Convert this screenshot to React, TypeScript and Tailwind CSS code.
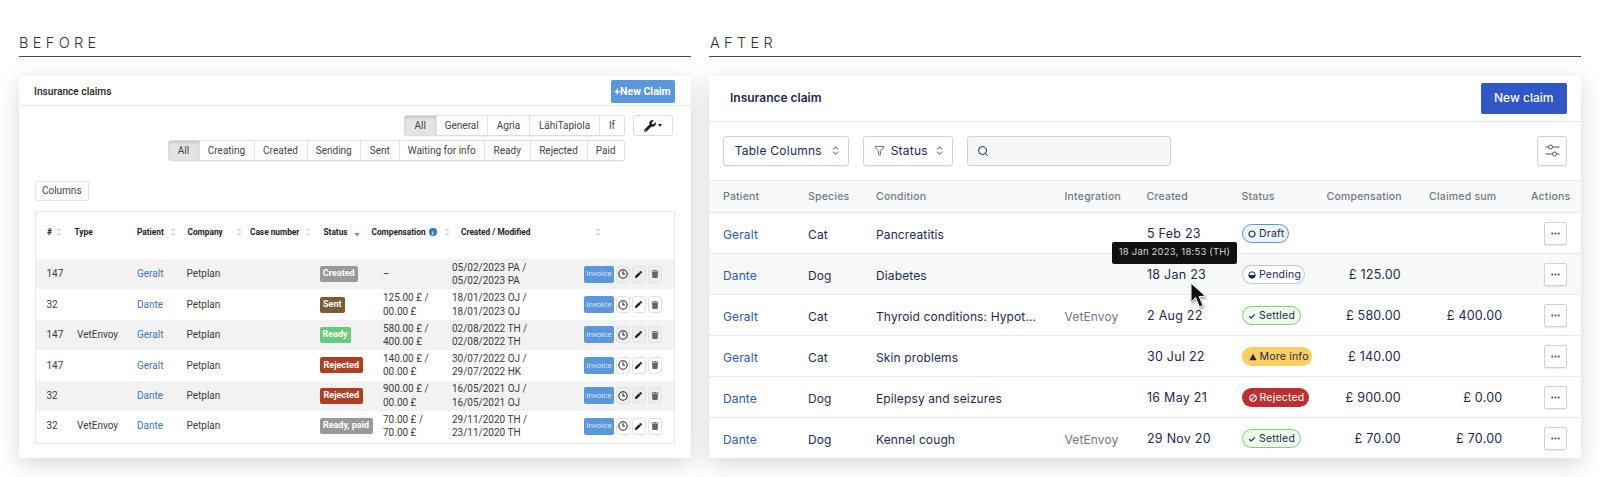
import { ChevronsUpDown, Clock3, Ellipsis, Funnel, Search } from "lucide-react";
import { FaPen, FaTrash, FaWrench } from "react-icons/fa";
import { ReactNode } from "react";

const oldRows = [
  { id: "147", type: "", patient: "Geralt", status: "Created", statusClass: "bg-[#999999] w-[38.5px]", comp: ["–", ""], dates: ["05/02/2023 PA /", "05/02/2023 PA"] },
  { id: "32", type: "", patient: "Dante", status: "Sent", statusClass: "bg-[#7f5a33] w-[25.5px]", comp: ["125.00 £ /", "00.00 £"], dates: ["18/01/2023 OJ /", "18/01/2023 OJ"] },
  { id: "147", type: "VetEnvoy", patient: "Geralt", status: "Ready", statusClass: "bg-[#66cc77] w-[31px]", comp: ["580.00 £ /", "400.00 £"], dates: ["02/08/2022 TH /", "02/08/2022 TH"] },
  { id: "147", type: "", patient: "Geralt", status: "Rejected", statusClass: "bg-[#b03e22] w-[43.5px]", comp: ["140.00 £ /", "00.00 £"], dates: ["30/07/2022 OJ /", "29/07/2022 HK"] },
  { id: "32", type: "", patient: "Dante", status: "Rejected", statusClass: "bg-[#b03e22] w-[43.5px]", comp: ["900.00 £ /", "00.00 £"], dates: ["16/05/2021 OJ /", "16/05/2021 OJ"] },
  { id: "32", type: "VetEnvoy", patient: "Dante", status: "Ready, paid", statusClass: "bg-[#999999] w-[53px]", comp: ["70.00 £ /", "70.00 £"], dates: ["29/11/2020 TH /", "23/11/2020 TH"] },
];

const newRows = [
  { patient: "Geralt", species: "Cat", condition: "Pancreatitis", integration: "", created: "5 Feb 23", status: "draft", comp: "", claimed: "" },
  { patient: "Dante", species: "Dog", condition: "Diabetes", integration: "", created: "18 Jan 23", status: "pending", comp: "£ 125.00", claimed: "" },
  { patient: "Geralt", species: "Cat", condition: "Thyroid conditions: Hypot...", integration: "VetEnvoy", created: "2 Aug 22", status: "settled", comp: "£ 580.00", claimed: "£ 400.00" },
  { patient: "Geralt", species: "Cat", condition: "Skin problems", integration: "", created: "30 Jul 22", status: "info", comp: "£ 140.00", claimed: "" },
  { patient: "Dante", species: "Dog", condition: "Epilepsy and seizures", integration: "", created: "16 May 21", status: "rejected", comp: "£ 900.00", claimed: "£ 0.00" },
  { patient: "Dante", species: "Dog", condition: "Kennel cough", integration: "VetEnvoy", created: "29 Nov 20", status: "settled", comp: "£ 70.00", claimed: "£ 70.00" },
];

const SortArrows = ({ active }: { active?: boolean }) => (
  <svg width="6" height="10" viewBox="0 0 6 10" className="shrink-0">
    {!active && <path d="M3 0.5 L5.5 4 H0.5 Z" fill="#dddddd" />}
    <path d="M3 9.5 L5.5 6 H0.5 Z" fill={active ? "#7a7fd8" : "#dddddd"} />
  </svg>
);

const Segments = ({ items }: { items: [string, string][] }) => (
  <div className="flex h-[21px] rounded-[3px] border border-[#dddddd] shadow-[0_1px_1px_rgba(0,0,0,0.05)]">
    {items.map(([label, width], i) => (
      <div
        key={label}
        style={{ width }}
        className={`flex items-center justify-center border-r border-[#e2e2e2] last:border-r-0 text-[10px] text-[#444444] ${i === 0 ? "bg-[#e4e4e4] shadow-[inset_0_2px_3px_rgba(0,0,0,0.12)]" : "bg-white"}`}
      >
        {label}
      </div>
    ))}
  </div>
);

const OldIconButton = ({ children, shaded }: { children: ReactNode; shaded: boolean }) => (
  <div className={`flex h-[17px] w-[14.5px] items-center justify-center rounded-[3px] border border-[#e2e2e2] ${shaded ? "bg-[#eeeeee]" : "bg-white"}`}>
    {children}
  </div>
);

const Before = () => (
  <section className="w-[671.5px] shrink-0 font-['Roboto',sans-serif]">
    <h2 className="flex h-[56.5px] items-end border-b border-[#3f4a52] pb-[3px] font-['Inter',sans-serif] text-[14.5px] leading-[20px] font-light tracking-[0.3em] text-[#27323a]">
      BEFORE
    </h2>
    <div className="mt-[19.5px] h-[382px] rounded-[2px] bg-white shadow-[0_6px_22px_rgba(0,0,0,0.16)]">
      <div className="flex h-[30px] items-center justify-between border-b border-[#e9e9e9] pt-[2px] pr-[16px] pl-[15px]">
        <span className="text-[10.2px] font-medium text-[#222222]">Insurance claims</span>
        <div className="flex h-[22.5px] w-[64px] items-center justify-center rounded-[2px] bg-[#5b97dc] text-[10.5px] font-bold text-white">
          +New Claim
        </div>
      </div>
      <div className="mt-[9px] flex justify-end gap-[8px] pr-[18px]">
        <Segments items={[["All", "31.5px"], ["General", "51.5px"], ["Agria", "42px"], ["LähiTapiola", "70px"], ["If", "24px"]]} />
        <div className="flex h-[21px] w-[39.5px] items-center justify-center gap-[2px] rounded-[3px] border border-[#dddddd] bg-white">
          <FaWrench className="size-[12px] text-[#222222]" />
          <span className="h-0 w-0 border-x-[2.5px] border-t-[3px] border-x-transparent border-t-[#222222]" />
        </div>
      </div>
      <div className="mt-[4px] flex justify-end pr-[65.5px]">
        <Segments items={[["All", "31px"], ["Creating", "55px"], ["Created", "53px"], ["Sending", "53.5px"], ["Sent", "38.5px"], ["Waiting for info", "85.5px"], ["Ready", "45.5px"], ["Rejected", "57px"], ["Paid", "36.5px"]]} />
      </div>
      <div className="mt-[19.5px] ml-[16px] flex h-[20px] w-[53.5px] items-center justify-center rounded-[2px] border border-[#e5e5e5] text-[10px] text-[#444444]">
        Columns
      </div>
      <div className="mx-[15.5px] mt-[10.5px] h-[232.5px] border border-[#e8e8e8]">
        <div className="flex h-[47px] items-start pt-[14px] pl-[11.5px] text-[8.3px] font-bold text-[#222222]">
          <div className="flex w-[27.5px] items-center gap-[4px]"># <SortArrows /></div>
          <div className="w-[62.5px]">Type</div>
          <div className="flex w-[50.5px] items-center gap-[6px]">Patient <SortArrows /></div>
          <div className="flex w-[62.5px] items-center gap-[13px]">Company <SortArrows /></div>
          <div className="flex w-[73.5px] items-center gap-[6px]">Case number <SortArrows /></div>
          <div className="flex w-[48px] items-center gap-[6px]">Status <SortArrows active /></div>
          <div className="flex w-[89.5px] items-center gap-[3px]">
            Compensation
            <span className="flex size-[8px] items-center justify-center rounded-full bg-[#2f7cc4] text-[6px] text-white">i</span>
            <span className="ml-[4px]"><SortArrows /></span>
          </div>
          <div className="flex w-[140px] items-center justify-between">Created / Modified <SortArrows /></div>
        </div>
        {oldRows.map((row, i) => (
          <div key={i} className={`flex h-[30.4px] items-center pl-[11px] text-[10px] leading-[13.4px] text-[#3a3a3a] ${i % 2 === 0 ? "bg-[#f2f2f2]" : "bg-white"}`}>
            <div className="w-[30.5px]">{row.id}</div>
            <div className="w-[60px]">{row.type}</div>
            <div className="w-[49.5px] text-[#3d76b5]">{row.patient}</div>
            <div className="w-[133px]">Petplan</div>
            <div className="w-[63.5px]">
              <div className={`flex h-[16px] items-center justify-center rounded-[2px] text-[9px] font-bold text-white ${row.statusClass}`}>
                {row.status}
              </div>
            </div>
            <div className="w-[69px]">{row.comp[0]}<br />{row.comp[1]}</div>
            <div className="w-[132px]">{row.dates[0]}<br />{row.dates[1]}</div>
            <div className="flex items-center gap-[1.5px]">
              <div className="flex h-[17px] w-[30px] items-center justify-center rounded-[2px] bg-[#5b97dc] text-[8px] text-[#dbe8f7]">Invoice</div>
              <OldIconButton shaded={i % 2 === 0}><Clock3 className="size-[10px] text-[#222222]" strokeWidth={2.5} /></OldIconButton>
              <OldIconButton shaded={i % 2 === 0}><FaPen className="size-[7px] text-[#222222]" /></OldIconButton>
              <OldIconButton shaded={i % 2 === 0}><FaTrash className="size-[8px] text-[#666666]" /></OldIconButton>
            </div>
          </div>
        ))}
      </div>
    </div>
  </section>
);

const StatusBadge = ({ status }: { status: string }) => {
  const shared = "flex h-[18.5px] items-center gap-[3px] rounded-full pl-[5px] text-[10.5px] tracking-[0.02em]";
  if (status === "draft")
    return (
      <div className={`${shared} w-[47px] border-[1.5px] border-[#5f93e8] bg-[#eef4fd] text-[#1d2a4d]`}>
        <svg width="8" height="8" viewBox="0 0 8 8"><circle cx="4" cy="4" r="3" fill="none" stroke="#1d2a4d" strokeWidth="1.2" /></svg>
        Draft
      </div>
    );
  if (status === "pending")
    return (
      <div className={`${shared} w-[63px] border-[1.5px] border-[#c4c6ca] bg-white text-[#1d2a4d]`}>
        <svg width="8" height="8" viewBox="0 0 8 8"><circle cx="4" cy="4" r="3.2" fill="none" stroke="#1d2a4d" strokeWidth="1" /><path d="M0.8 4 a3.2 3.2 0 0 0 6.4 0 Z" fill="#1d2a4d" /></svg>
        Pending
      </div>
    );
  if (status === "settled")
    return (
      <div className={`${shared} w-[59px] border-[1.5px] border-[#7fd07a] bg-[#eefaec] text-[#1d2a4d]`}>
        <svg width="8" height="8" viewBox="0 0 8 8"><path d="M1.2 4.2 L3.2 6 L6.8 2.4" fill="none" stroke="#1d2a4d" strokeWidth="1.2" /></svg>
        Settled
      </div>
    );
  if (status === "info")
    return (
      <div className={`${shared} w-[70px] bg-[#fdcf63] pl-[6.5px] text-[#1d2a4d]`}>
        <svg width="8" height="8" viewBox="0 0 8 8"><path d="M4 0.8 L7.6 7.2 H0.4 Z" fill="#1d2a4d" /></svg>
        More info
      </div>
    );
  return (
    <div className={`${shared} w-[67px] bg-[#bd2f31] pl-[6.5px] text-white`}>
      <svg width="8" height="8" viewBox="0 0 8 8"><circle cx="4" cy="4" r="3.2" fill="none" stroke="white" strokeWidth="1.1" /><path d="M1.8 6.2 L6.2 1.8" stroke="white" strokeWidth="1.1" /></svg>
      Rejected
    </div>
  );
};

const SelectButton = ({ children, className }: { children: ReactNode; className: string }) => (
  <div className={`flex h-[30.5px] items-center rounded-[3px] border border-[#cfd3d8] bg-white text-[12px] tracking-[0.02em] text-[#1d2a4d] shadow-[0_1px_1px_rgba(0,0,0,0.06)] ${className}`}>
    {children}
  </div>
);

const After = () => (
  <section className="w-[872px] shrink-0 font-['Inter',sans-serif]">
    <h2 className="flex h-[56.5px] items-end border-b border-[#3f4a52] pb-[3px] pl-px text-[14.5px] leading-[20px] font-light tracking-[0.3em] text-[#27323a]">
      AFTER
    </h2>
    <div className="relative mt-[19.5px] h-[382px] overflow-hidden bg-white shadow-[0_6px_22px_rgba(0,0,0,0.16)]">
      <div className="flex h-[45.5px] items-center justify-between border-b border-[#e5e7ea] pr-[14px] pl-[21px]">
        <span className="text-[12px] font-semibold text-[#1d2a4d]">Insurance claim</span>
        <div className="flex h-[30.5px] w-[86.5px] items-center justify-center rounded-[2px] bg-[#3056c8] text-[12px] font-medium text-white">
          New claim
        </div>
      </div>
      <div className="flex h-[58.5px] items-center pr-[14px] pl-[14px]">
        <SelectButton className="w-[125.5px] justify-center gap-[8px] pl-[4px]">
          Table Columns
          <ChevronsUpDown className="size-[11px]" />
        </SelectButton>
        <SelectButton className="ml-[14px] w-[90.5px] justify-center gap-[6px] pl-[3px]">
          <Funnel className="size-[11px]" strokeWidth={1.5} />
          Status
          <ChevronsUpDown className="size-[11px]" />
        </SelectButton>
        <div className="ml-[14px] flex h-[30.5px] w-[203.5px] items-center rounded-[3px] border border-[#cfd3d8] bg-[#f4f6f7] pl-[9px]">
          <Search className="size-[12px] text-[#1d2a4d]" />
        </div>
        <div className="ml-auto flex h-[30.5px] w-[30px] items-center justify-center rounded-[3px] border border-[#cfd3d8] bg-white shadow-[0_1px_1px_rgba(0,0,0,0.06)]">
          <svg width="15" height="13" viewBox="0 0 15 13" fill="none" stroke="#4b5563" strokeWidth="1">
            <path d="M0.5 3 H3.5 M7.5 3 H14.5 M0.5 10 H7.5 M11.5 10 H14.5" />
            <circle cx="5.5" cy="3" r="2" />
            <circle cx="9.5" cy="10" r="2" />
          </svg>
        </div>
      </div>
      <div className="flex h-[32.5px] items-center border-y-[1.5px] border-[#e8eaed] bg-[#f8f9fa] pt-[2px] text-[10.5px] font-medium tracking-[0.02em] text-[#6f7883]">
        <div className="w-[99px] pl-[14px]">Patient</div>
        <div className="w-[68px]">Species</div>
        <div className="w-[188.5px]">Condition</div>
        <div className="w-[82px]">Integration</div>
        <div className="w-[95px]">Created</div>
        <div className="w-[85px]">Status</div>
        <div className="w-[102.5px]">Compensation</div>
        <div className="w-[102px]">Claimed sum</div>
        <div>Actions</div>
      </div>
      {newRows.map((row, i) => (
        <div key={i} className={`flex h-[41px] items-center border-b border-[#e6e9ee] pt-[2px] text-[12px] tracking-[0.01em] text-[#1d2a4d] first:h-[40.5px] last:border-b-0 ${i === 1 ? "bg-[#f8fafa]" : "bg-white"}`}>
          <div className="w-[99px] pt-[2px] pl-[14px] text-[#2f56c4]">{row.patient}</div>
          <div className="w-[68px] pt-[2px]">{row.species}</div>
          <div className="w-[188.5px] pt-[2px]">{row.condition}</div>
          <div className="w-[82.5px] pt-[2px] text-[#6f7883]">{row.integration}</div>
          <div className="w-[95px] pt-[2px] text-[12.5px] tracking-[0.02em]">{row.created}</div>
          <div className="w-[101px]"><StatusBadge status={row.status} /></div>
          <div className="w-[58px] pt-[2px] text-right text-[12.5px] tracking-[0.02em] whitespace-nowrap">{row.comp}</div>
          <div className="w-[101.5px] pt-[2px] text-right text-[12.5px] tracking-[0.02em] whitespace-nowrap">{row.claimed}</div>
          <div className="ml-[41.5px] flex size-[22.5px] items-center justify-center rounded-[2px] border border-[#cfd3d8] bg-white shadow-[0_1px_1px_rgba(0,0,0,0.08)]">
            <Ellipsis className="size-[11px] text-[#4b5563]" strokeWidth={2.5} />
          </div>
        </div>
      ))}
      <div className="absolute top-[165.5px] left-[403px] flex h-[22px] w-[125px] items-center justify-center rounded-[2px] bg-[#111111] text-[9.5px] tracking-[0.02em] whitespace-nowrap text-[#d8d8d8]">
        18 Jan 2023, 18:53 (TH)
      </div>
      <svg className="absolute top-[206px] left-[481px] drop-shadow-[1px_2px_1px_rgba(0,0,0,0.35)]" width="17" height="27" viewBox="0 0 17 27">
        <path d="M1 1 L1 20 L5.5 15.5 L9.5 25 L13 23.5 L9.2 14.5 L15.5 14.2 Z" fill="#111111" stroke="white" strokeWidth="1" />
      </svg>
    </div>
  </section>
);

export default function App() {
  return (
    <div className="flex h-[477px] w-[1600px] gap-[18.5px] overflow-hidden bg-white pl-[19px]">
      <Before />
      <After />
    </div>
  );
}
